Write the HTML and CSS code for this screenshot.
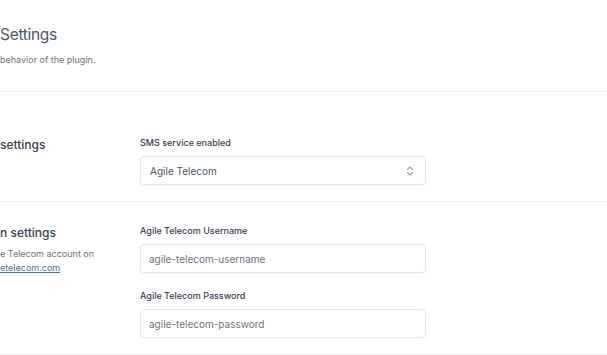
FILE: index.html
```html
<!DOCTYPE html>
<html>
<head>
<meta charset="utf-8">
<link rel="stylesheet" href="styles.css">
</head>
<body>
<div class="page">
  <header class="header">
    <h1 class="title">Settings</h1>
    <p class="caption">behavior of the plugin.</p>
  </header>
  <section class="section section-first">
    <div class="side">
      <h2 class="side-title">settings</h2>
    </div>
    <div class="fields">
      <div class="field">
        <label class="label">SMS service enabled</label>
        <div class="select">
          <span>Agile Telecom</span>
          <svg class="chev" width="8" height="12" viewBox="0 0 8 12"><path d="M1.5 4.5 L4 2 L6.5 4.5 M1.5 7.5 L4 10 L6.5 7.5" fill="none" stroke="#9ca3af" stroke-width="1.1" stroke-linecap="round" stroke-linejoin="round"/></svg>
        </div>
      </div>
    </div>
  </section>
  <section class="section">
    <div class="side">
      <h2 class="side-title">n settings</h2>
      <p class="side-desc">e Telecom account on<br><a class="link" href="#">etelecom.com</a></p>
    </div>
    <div class="fields">
      <div class="field">
        <label class="label">Agile Telecom Username</label>
        <div class="input">agile-telecom-username</div>
      </div>
      <div class="field">
        <label class="label">Agile Telecom Password</label>
        <div class="input">agile-telecom-password</div>
      </div>
    </div>
  </section>
</div>
</body>
</html>
```
FILE: styles.css
```css
* { box-sizing: border-box; }
html, body { margin: 0; padding: 0; background: #fff; }
body { font-family: Inter, "Liberation Sans", sans-serif; color: #374151; }
.page { width: 607px; }
.header { padding: 23px 0 25px; border-bottom: 1px solid #ececec; }
.title { margin: 0; font-size: 15.5px; line-height: 24px; font-weight: 400; letter-spacing: -0.3px; color: #4b5563; }
.caption { margin: 7px 0 0; font-size: 9px; line-height: 12px; color: #6b7280; }
.section { display: grid; grid-template-columns: 140px 286px; border-bottom: 1px solid #ececec; }
.section-first { padding: 45px 0 16px; }
.section:not(.section-first) { padding: 23px 0 16px; }
.side-title { margin: 0; font-size: 12px; line-height: 15px; font-weight: 500; color: #374151; }
.side-title-2 { letter-spacing: -0.2px; }
.side-desc { margin: 7px 0 0; font-size: 9px; line-height: 14px; color: #6b7280; }
.link { color: #4a7196; text-decoration: underline; }
.fields { display: flex; flex-direction: column; gap: 17px; }
.field { display: flex; flex-direction: column; gap: 7px; }
.label { font-size: 9px; line-height: 12px; font-weight: 500; color: #374151; }
.select, .input { height: 29px; border: 1px solid #e3e5e8; border-radius: 4px; box-shadow: 0 1px 2px rgba(0,0,0,0.04); display: flex; align-items: center; justify-content: space-between; padding: 0 9px 0 9px; font-size: 10px; color: #4b5563; }
.input { color: #6b7280; padding-left: 8px; }
.chev { margin-right: 2px; }
```
